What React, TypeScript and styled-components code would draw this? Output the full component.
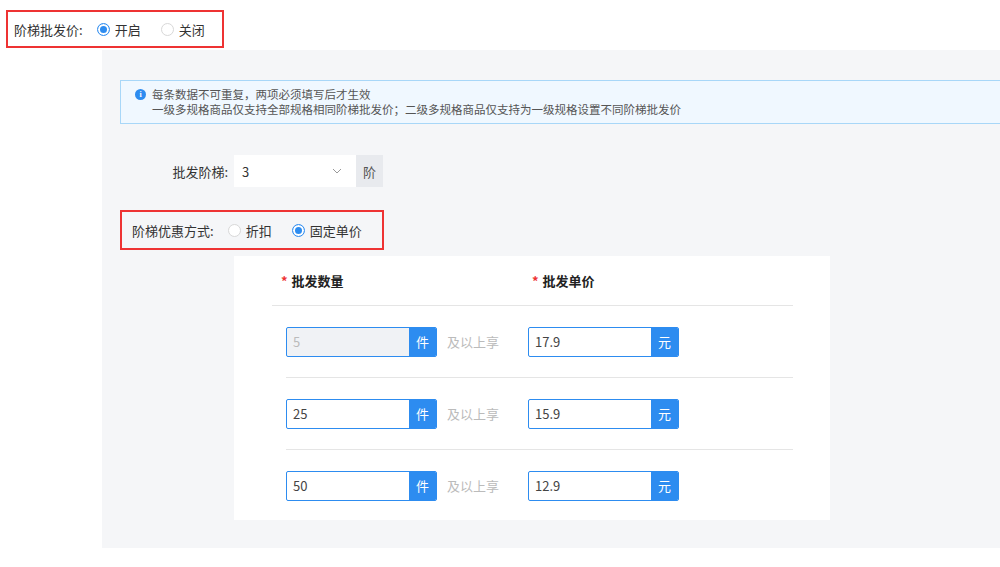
import React from "react";
import styled, { createGlobalStyle } from "styled-components";

const G = createGlobalStyle`
  body { margin:0; font-family: "Noto Sans CJK SC", "Liberation Sans", sans-serif; font-size:12px; color:#333; background:#fff; }
  * { white-space: nowrap; }
`;
const Page = styled.div`width:1000px;height:567px;overflow:hidden;position:relative;`;
const RedBox = styled.div<{ w: number }>`
  display:flex;align-items:center;height:${p => p.w > 230 ? 40 : 38}px;width:${p => p.w}px;box-sizing:border-box;
  border:2px solid #ee3333;padding-left:${p => p.w > 230 ? 10 : 6}px;font-size:13px;color:#333;
`;
const Top = styled.div`padding:10px 0 0 6px;`;
const Panel = styled.div`margin:2px 0 0 102px;height:498px;background:#f5f6f8;padding:30px 0 0 18px;box-sizing:border-box;`;
const Info = styled.div`
  height:44px;box-sizing:border-box;border:1px solid #a8d7f8;border-right:none;background:#f0f8ff;
  display:flex;padding:6px 0 0 14px;gap:6px;font-size:11.5px;color:#555;line-height:15px;
`;
const Dot = styled.div`width:11px;height:11px;border-radius:50%;background:#2d8cf0;color:#fff;font-size:8px;flex-shrink:0;
  display:flex;align-items:center;justify-content:center;font-weight:bold;margin-top:2px;font-family:"Liberation Serif",serif;`;
const Row = styled.div`display:flex;align-items:center;margin-top:31px;`;
const Label = styled.div`width:114px;text-align:right;padding-right:6px;box-sizing:border-box;font-size:13px;`;
const Select = styled.div`width:122px;height:32px;background:#fff;display:flex;align-items:center;justify-content:space-between;padding:0 14px 0 8px;box-sizing:border-box;font-size:13px;`;
const Addon = styled.div`width:27px;height:32px;background:#e8eaee;display:flex;align-items:center;justify-content:center;color:#555;font-size:13px;`;
const Radio = styled.span<{ on?: boolean }>`
  display:inline-block;width:13px;height:13px;border-radius:50%;box-sizing:border-box;margin-right:5px;flex-shrink:0;
  border:1px solid ${p => p.on ? "#2d8cf0" : "#d8d8d8"};background:#fff;
  box-shadow: ${p => p.on ? "inset 0 0 0 2px #fff, inset 0 0 0 6px #2d8cf0" : "none"};
`;
const Opt = styled.label`display:flex;align-items:center;margin-right:20px;font-size:13px;flex-shrink:0;`;
const Lead = styled.span`margin-right:14px;flex-shrink:0;`;
const Box2 = styled.div`margin-top:23px;`;
const Card = styled.div`margin:6px 0 0 114px;width:596px;height:264px;background:#fff;padding:0 37px 0 38px;box-sizing:border-box;`;
const Head = styled.div`display:flex;height:49px;align-items:center;border-bottom:1px solid #e5e5e5;font-weight:bold;font-size:13px;color:#222;`;
const HCell = styled.div<{ w: number }>`width:${p => p.w}px;padding-left:9px;`;
const Star = styled.span`color:#e33;margin-right:4px;`;
const DataRow = styled.div<{ last?: boolean }>`margin-left:14px;display:flex;align-items:center;height:71px;
  border-bottom:${p => p.last ? "none" : "1px solid #e5e5e5"};`;
const Input = styled.div<{ dis?: boolean }>`display:flex;width:151px;height:30px;border:1px solid #2d8cf0;border-radius:2px;box-sizing:border-box;overflow:hidden;
  background:${p => p.dis ? "#f0f2f5" : "#fff"};`;
const Val = styled.div<{ dis?: boolean }>`flex:1;padding-left:6px;display:flex;align-items:center;font-size:13px;color:${p => p.dis ? "#bbb" : "#444"};`;
const Unit = styled.div`width:27px;background:#2d8cf0;color:#fff;display:flex;align-items:center;justify-content:center;font-size:13px;`;
const Hint = styled.div`width:91px;padding-left:10px;box-sizing:border-box;color:#bbb;font-size:13px;`;

const rows = [["5", "17.9", true], ["25", "15.9"], ["50", "12.9"]] as const;

export default function App() {
  return (
    <Page>
      <G />
      <Top>
        <RedBox w={218}>
          <Lead>阶梯批发价:</Lead>
          <Opt><Radio on />开启</Opt>
          <Opt><Radio />关闭</Opt>
        </RedBox>
      </Top>
      <Panel>
        <Info>
          <Dot>i</Dot>
          <div>每条数据不可重复，两项必须填写后才生效<br />一级多规格商品仅支持全部规格相同阶梯批发价；二级多规格商品仅支持为一级规格设置不同阶梯批发价</div>
        </Info>
        <Row>
          <Label>批发阶梯:</Label>
          <Select>3<svg width="10" height="6" viewBox="0 0 10 6"><path d="M1 1l4 4 4-4" fill="none" stroke="#999" strokeWidth="1" /></svg></Select>
          <Addon>阶</Addon>
        </Row>
        <Box2>
          <RedBox w={264}>
            <Lead>阶梯优惠方式:</Lead>
            <Opt><Radio />折扣</Opt>
            <Opt><Radio on />固定单价</Opt>
          </RedBox>
        </Box2>
        <Card>
          <Head>
            <HCell w={242}><Star>*</Star>批发数量</HCell>
            <HCell w={200}><Star>*</Star>批发单价</HCell>
          </Head>
          {rows.map((r, i) => (
            <DataRow key={i} last={i === 2}>
              <Input dis={!!r[2]}><Val dis={!!r[2]}>{r[0]}</Val><Unit>件</Unit></Input>
              <Hint>及以上享</Hint>
              <Input><Val>{r[1]}</Val><Unit>元</Unit></Input>
            </DataRow>
          ))}
        </Card>
      </Panel>
    </Page>
  );
}
